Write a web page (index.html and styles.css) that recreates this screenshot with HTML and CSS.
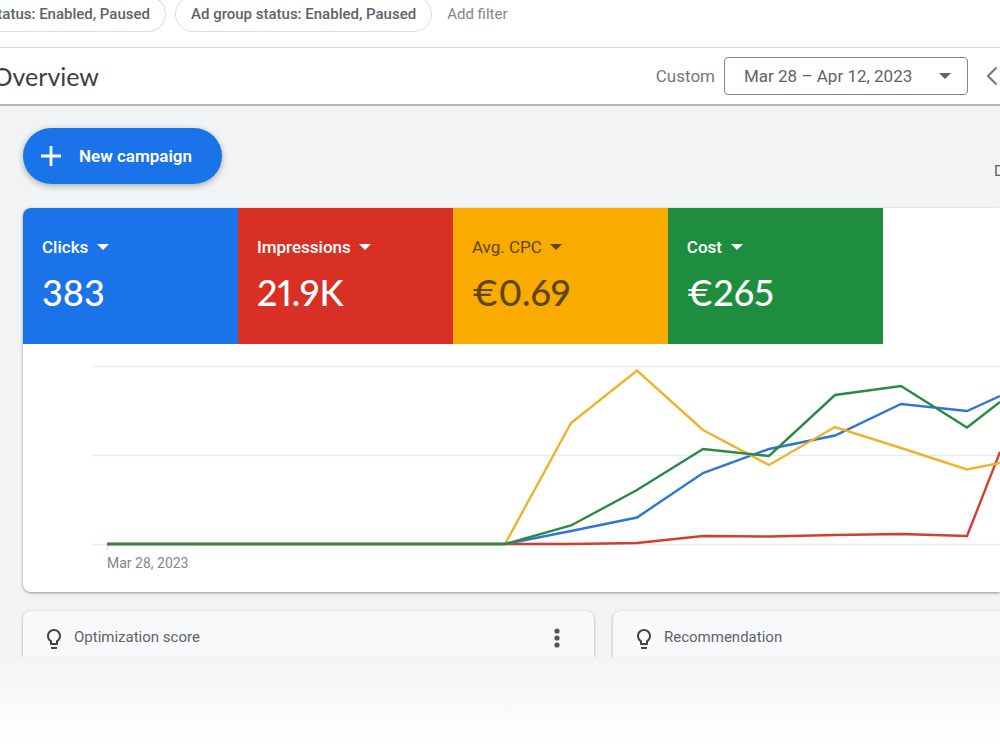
FILE: index.html
```html
<!DOCTYPE html>
<html lang="en">

<head>
    <meta charset="UTF-8">
    <title>Overview</title>
    <link rel="stylesheet" href="styles.css">
</head>

<body>
    <!-- filters -->
    <div class="filters">
        <button class="chip chip-cut">tatus: Enabled, Paused</button>
        <button class="chip">Ad group status: Enabled, Paused</button>
        <button class="add-filter">Add filter</button>
    </div>

    <!-- title bar -->
    <header class="header">
        <h1 class="title">Overview</h1>
        <div class="dates">
            <label for="range">Custom</label>
            <div class="date-box">
                <select id="range">
                    <option>Mar 28 – Apr 12, 2023</option>
                </select>
            </div>
            <button class="prev" aria-label="Previous">
                <svg width="12" height="20" viewBox="0 0 12 20">
                    <path d="M10.500 1.500L2 10l8.500 8.500" fill="none" stroke="#757575" stroke-width="2" />
                </svg>
            </button>
        </div>
    </header>

    <main class="main">
        <div class="actions">
            <button class="new">
                <svg width="20" height="20" viewBox="0 0 20 20">
                    <path d="M10 0v20M0 10h20" stroke="#fff" stroke-width="2.800" />
                </svg>
                New campaign
            </button>
            <a class="download" href="#">D</a>
        </div>

        <section class="card">
            <div class="metrics">
                <div class="metric blue">
                    <div class="metric-name"><select aria-label="Metric 1"><option>Clicks</option></select></div>
                    <div class="value">383</div>
                </div>
                <div class="metric red">
                    <div class="metric-name"><select aria-label="Metric 2"><option>Impressions</option></select></div>
                    <div class="value">21.9K</div>
                </div>
                <div class="metric yellow">
                    <div class="metric-name"><select aria-label="Metric 3"><option>Avg. CPC</option></select></div>
                    <div class="value">€0.69</div>
                </div>
                <div class="metric green">
                    <div class="metric-name"><select aria-label="Metric 4"><option>Cost</option></select></div>
                    <div class="value">€265</div>
                </div>
            </div>
            <svg class="chart" viewBox="0 0 977 208">
                <!-- grid -->
                <path class="grid" d="M70 22.500H977M70 111.500H977M70 200.500H977M84.500 200V207" />
                <!-- lines -->
                <polyline stroke="#d23f31" points="84,200 482,200 548,200 614,199 680,192 746,192.500 812,191 878,190 944,192 977,108" />
                <polyline stroke="#2f75d6" points="84,200 482,200 548,187 614,173.500 680,129 746,105 812,91.500 878,60 944,67 977,52" />
                <polyline stroke="#efb229" points="84,200 482,200 548,79 614,26.500 680,86 746,121 812,83 878,104 944,125.500 977,119" />
                <polyline stroke="#2b8a48" points="84,200 482,200 548,181.500 614,146 680,105 746,112 812,51 878,42 944,83.500 977,58" />
            </svg>
            <div class="axis">Mar 28, 2023</div>
        </section>

        <div class="cards">
            <section class="small-card">
                <svg width="24" height="24" viewBox="0 0 24 24">
                    <path fill="#444" d="M9 21c0 .55.45 1 1 1h4c.55 0 1-.45 1-1v-1H9v1zm3-19C8.140 2 5 5.140 5 9c0 2.380 1.190 4.470 3 5.740V17c0 .55.45 1 1 1h6c.55 0 1-.45 1-1v-2.260c1.810-1.270 3-3.360 3-5.740 0-3.860-3.140-7-7-7zm2.850 11.100l-.85.6V16h-4v-2.300l-.85-.6C7.800 12.160 7 10.630 7 9c0-2.760 2.240-5 5-5s5 2.240 5 5c0 1.630-.8 3.160-2.150 4.100z" />
                </svg>
                <h2>Optimization score</h2>
                <button class="more" aria-label="More">
                    <svg width="6" height="20" viewBox="0 0 6 20" fill="#555">
                        <circle cx="3" cy="3" r="2.600" />
                        <circle cx="3" cy="10" r="2.600" />
                        <circle cx="3" cy="17" r="2.600" />
                    </svg>
                </button>
            </section>
            <section class="small-card last">
                <svg width="24" height="24" viewBox="0 0 24 24">
                    <path fill="#444" d="M9 21c0 .55.45 1 1 1h4c.55 0 1-.45 1-1v-1H9v1zm3-19C8.140 2 5 5.140 5 9c0 2.380 1.190 4.470 3 5.740V17c0 .55.45 1 1 1h6c.55 0 1-.45 1-1v-2.260c1.810-1.270 3-3.360 3-5.740 0-3.860-3.140-7-7-7zm2.850 11.100l-.85.6V16h-4v-2.300l-.85-.6C7.800 12.160 7 10.630 7 9c0-2.760 2.240-5 5-5s5 2.240 5 5c0 1.630-.8 3.160-2.150 4.100z" />
                </svg>
                <h2>Recommendation</h2>
            </section>
        </div>
    </main>
    <div class="fade"></div>
</body>

</html>
```
FILE: styles.css
```css
* {
    padding: 0;
    margin: 0;
    box-sizing: border-box;
}

body {
    min-height: 100vh;
    display: flex;
    flex-direction: column;
    font-family: Roboto, "Liberation Sans", sans-serif;
    font-size: 15px;
    color: #5f6368;
    background-color: #fff;
    overflow-x: hidden;
}

button,
select {
    font: inherit;
    color: inherit;
    border: 0;
    background: none;
    cursor: pointer;
}

select {
    appearance: none;
}

svg {
    display: block;
    flex: none;
}

/* filters */
.filters {
    height: 48px;
    display: flex;
    align-items: flex-start;
    gap: 9px;
    border-bottom: 1px solid #e0e0e0;
    overflow: hidden;
}

.chip,
.add-filter {
    height: 36px;
    margin-top: -4px;
    white-space: nowrap;
}

.chip {
    padding: 0 15px;
    border: 1px solid #dadce0;
    border-radius: 18px;
    font-weight: 500;
}

.chip-cut {
    width: 166px;
    display: flex;
    align-items: center;
    justify-content: flex-end;
    padding-left: 0;
    border-left: 0;
    border-radius: 0 18px 18px 0;
    overflow: hidden;
}

.add-filter {
    padding: 0 6px;
    color: #80868b;
}

/* title bar */
.header {
    height: 58px;
    display: flex;
    align-items: center;
    justify-content: space-between;
    border-bottom: 2px solid #b4b6b8;
    box-shadow: 0 1px 3px rgba(0, 0, 0, .15);
}

.title {
    width: 99px;
    display: flex;
    justify-content: flex-end;
    font-family: Lato, Roboto, sans-serif;
    font-size: 25px;
    font-weight: 400;
    color: #3c4043;
    overflow: hidden;
}

.dates {
    display: flex;
    align-items: center;
    gap: 9px;
    font-size: 17px;
    color: #757575;
}

.date-box {
    width: 244px;
    height: 38px;
    display: flex;
    align-items: center;
    justify-content: space-between;
    padding: 0 16px 0 19px;
    border: 1px solid #80868b;
    border-radius: 4px;
    color: #5f6368;
}

/* dropdown arrow */
.date-box::after,
.metric-name::after {
    content: "";
    border: 6px solid transparent;
    border-top-color: currentColor;
    border-bottom: 0;
}

.prev {
    margin: 0 2px 0 9px;
}

/* content */
.main {
    padding: 22px 0 0 23px;
    background-color: #f1f3f4;
    overflow: hidden;
}

.actions {
    display: flex;
    align-items: center;
    justify-content: space-between;
    margin-bottom: 24px;
}

.new {
    width: 199px;
    height: 56px;
    display: flex;
    align-items: center;
    gap: 18px;
    padding-left: 18px;
    border-radius: 28px;
    font-size: 17px;
    font-weight: 600;
    white-space: nowrap;
    color: #fff;
    background-color: #1a73e8;
    box-shadow: 0 2px 6px rgba(60, 64, 67, .4);
}

.download {
    width: 6px;
    margin-top: 30px;
    color: #5f6368;
    text-decoration: none;
    overflow: hidden;
}

.card {
    height: 384px;
    border-radius: 8px 0 0 8px;
    background-color: #fff;
    box-shadow: 0 1px 3px rgba(0, 0, 0, .4);
    overflow: hidden;
}

.metrics {
    display: grid;
    grid-template-columns: repeat(4, 22%);
}

.metric {
    height: 136px;
    padding: 28px 19px 0;
    color: #fff;
}

.metric-name {
    display: flex;
    align-items: center;
    gap: 8px;
    height: 22px;
    font-size: 17px;
    font-weight: 500;
}

.value {
    margin-top: 12px;
    font-family: Lato, Roboto, sans-serif;
    font-size: 36px;
    font-weight: 500;
    font-variant-numeric: proportional-nums;
    line-height: 44px;
}

.blue {
    background-color: #1a73e8;
}

.red {
    background-color: #d93025;
}

.yellow {
    color: #5f4510;
    background-color: #f9ab00;
}

.yellow .metric-name {
    font-weight: 400;
}

.green {
    background-color: #1e8e3e;
}

.chart {
    width: 100%;
}

.chart polyline {
    fill: none;
    stroke-width: 2.4;
}

.grid {
    fill: none;
    stroke: #e8eaed;
    stroke-width: 1.6;
}

.axis {
    padding-left: 84px;
    font-size: 14px;
    line-height: 22px;
    color: #80868b;
}

/* bottom cards */
.cards {
    height: 46px;
    display: grid;
    grid-template-columns: minmax(0, 571px) 1fr;
    gap: 19px;
    margin-top: 19px;
}

.small-card {
    height: 80px;
    display: flex;
    align-items: flex-start;
    padding: 16px 34px 0 19px;
    border-radius: 8px;
    background-color: #f8f9fa;
    box-shadow: 0 1px 3px rgba(0, 0, 0, .35);
}

.last {
    border-radius: 8px 0 0 0;
}

.small-card h2 {
    margin-left: 8px;
    font-size: 15px;
    line-height: 20px;
    font-weight: 400;
}

.more {
    margin: 1px 0 0 auto;
}

.fade {
    flex: 1;
    min-height: 93px;
    background: linear-gradient(#f4f4f4, #fff 95%);
}
```
